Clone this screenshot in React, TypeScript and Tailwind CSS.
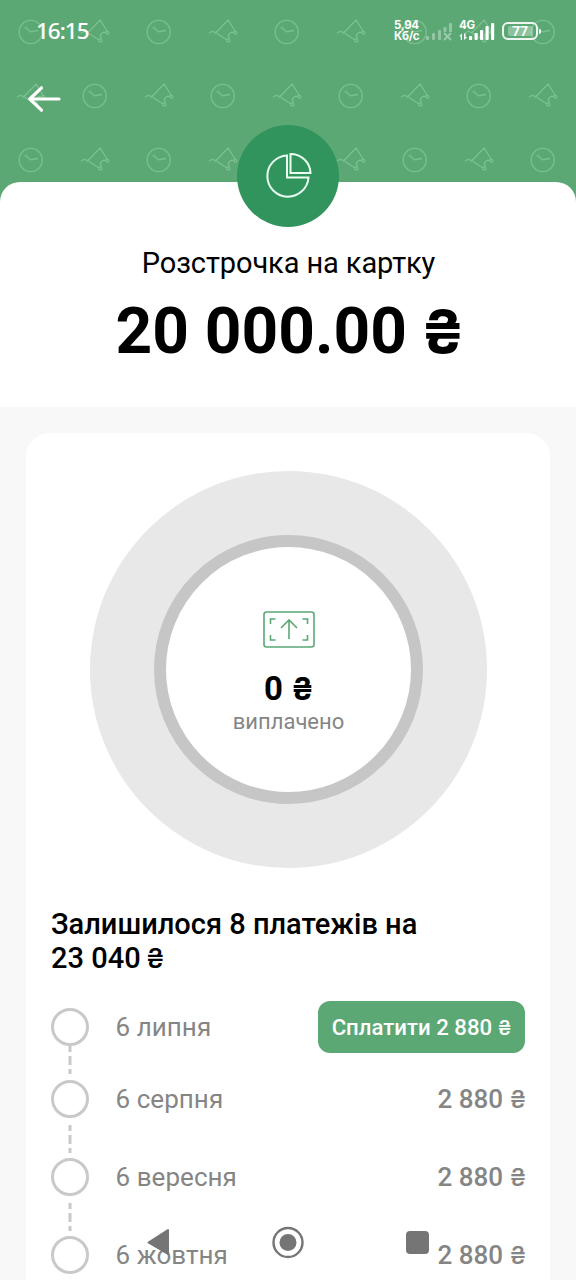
import React from "react";

const CLOCKS: [number, number][] = [];
const TAGS: [number, number][] = [];
for (let row = 0; row < 3; row++) {
  for (let col = 0; col < 9; col++) {
    const point: [number, number] = [30.7 + col * 64, 32 + row * 64];
    ((row + col) % 2 === 0 ? CLOCKS : TAGS).push(point);
  }
}

function Pattern() {
  return (
    <svg className="absolute inset-0" width="576" height="200" viewBox="0 0 576 200" fill="none" stroke="#7ac18e" strokeWidth="1.3" strokeLinecap="round" strokeLinejoin="round">
      {CLOCKS.map(([x, y]) => (
        <g key={`c${x}-${y}`} transform={`translate(${x} ${y})`}>
          <circle r="11.6" />
          <path d="M-5.500-4.800-.500-.200 6.800-1.500" />
        </g>
      ))}
      {TAGS.map(([x, y]) => (
        <g key={`t${x}-${y}`} transform={`translate(${x} ${y})`}>
          <path d="M -13.5 1 L -10.5 -0.8 L -7 0.8 L 5.5 -12 L 12.5 -0.5" />
          <path d="M -7 0.8 L 4 7.8 M 6.3 6.5 C 4.500 2.500 8 -0.500 11 0.500" />
          <circle cx="5.600" cy="8.500" r="1.600" />
          <circle cx="12.600" cy="0.800" r="1.500" />
        </g>
      ))}
    </svg>
  );
}

function StatusBar() {
  return (
    <div className="relative flex h-[62px] items-center pl-[36px] font-['Noto_Sans'] text-white">
      <span className="w-[358px] text-[22.5px] leading-none font-medium tracking-[-1px]">16:15</span>
      <div className="w-[30px] font-[Inter] text-[11.5px] leading-[11.5px] font-bold tracking-[-0.3px] whitespace-nowrap">
        <div>5,94</div>
        <div>Кб/с</div>
      </div>
      <svg className="ml-[1px]" width="28" height="20" viewBox="0 0 28 20" fill="#fff" fillOpacity=".35">
        <rect x="1" y="15" width="3" height="4" rx="1" />
        <rect x="7" y="12" width="3" height="7" rx="1" />
        <rect x="13" y="9" width="3" height="10" rx="1" />
        <rect x="18.500" y="6" width="3" height="5" rx="1" />
        <rect x="24" y="2" width="3" height="9" rx="1" />
        <path d="m19 12 7 7m0-7-7 7" stroke="#fff" strokeOpacity=".4" strokeWidth="2" />
      </svg>
      <div className="relative ml-[6px] h-[20px] w-[38px]">
        <span className="absolute -top-[1px] left-0 font-[Inter] text-[11.5px] leading-[11px] font-bold tracking-[-0.3px]">4G</span>
        <svg className="absolute inset-0" width="38" height="20" viewBox="0 0 38 20" fill="#fff">
          <path d="M.2 15.500 3 12.500v6.500H1.800v-3.500zM5 12.500h1.500v3.500h1.700L5 19z" />
          <rect x="10" y="15" width="3.200" height="4" rx="1" />
          <rect x="15.500" y="12" width="3.200" height="7" rx="1" />
          <rect x="21" y="9" width="3.200" height="10" rx="1" />
          <rect x="26.500" y="5" width="3.200" height="14" rx="1" />
          <rect x="32" y="2" width="3.200" height="17" rx="1" />
        </svg>
      </div>
      <div className="ml-[5px] flex items-center">
        <div className="flex h-[18px] w-[36px] items-center justify-center rounded-[6px] border-2 border-white/90 p-[2px]">
          <span className="flex h-full w-[25px] items-center justify-center rounded-[2px] bg-white/30 text-[14px] leading-none font-semibold">77</span>
        </div>
        <span className="ml-[1px] h-[5px] w-[2px] rounded-r bg-white" />
      </div>
    </div>
  );
}

const PAYMENTS = [
  { date: "6 липня", height: "h-[72px]" },
  { date: "6 серпня", height: "h-[78px]" },
  { date: "6 вересня", height: "h-[78px]" },
  { date: "6 жовтня", height: "h-[78px]" },
];

export default function App() {
  return (
    <div className="relative h-[1280px] w-[576px] overflow-hidden bg-[#f8f8f8] font-[Roboto,sans-serif]">
      <header className="relative h-[182px]">
        <div className="absolute inset-x-0 top-0 h-[210px] bg-[#5ba875]">
          <Pattern />
        </div>
        <StatusBar />
        <button aria-label="Назад" className="relative ml-[27px] mt-[23px] block">
          <svg width="36" height="28" viewBox="0 0 36 28" fill="none" stroke="#fff" strokeWidth="3.200" strokeLinecap="round" strokeLinejoin="round">
            <path d="M32 14H3M14.500 2.800 2.800 14l11.700 11.200" />
          </svg>
        </button>
      </header>

      <section className="relative flex h-[225px] flex-col items-center rounded-t-[20px] bg-white text-black">
        <div className="-mt-[57px] flex h-[102px] w-[102px] shrink-0 items-center justify-center rounded-full bg-[#31945c] pl-[2px]">
          <svg width="46" height="46" viewBox="0 0 46 46" fill="none" stroke="#e9fff2" strokeWidth="2">
            <path d="M21 2.500A20.600 20.600 0 1 0 42.500 24.500H21Z" />
            <path d="M24.500 1V20H44.500A20 19.500 0 0 0 24.500 1Z" />
          </svg>
        </div>
        <h1 className="mt-[18px] pl-[1px] text-[29px] leading-[36px] tracking-[-0.1px] whitespace-nowrap">Розстрочка на картку</h1>
        <p className="mt-[13px] text-[64px] leading-[76px] font-bold whitespace-nowrap">
          20 000.00 <span className="-mr-[4px] -ml-[2px] font-[Inter] text-[59px] leading-none">₴</span>
        </p>
      </section>

      <main className="mx-[26px] mt-[26px] h-[900px] rounded-[24px] bg-white px-[25px] pt-[38px]">
        <div className="mx-auto flex h-[397px] w-[397px] items-center justify-center rounded-full bg-[#e8e8e8]">
          <div className="flex h-[269px] w-[269px] flex-col items-center rounded-full border-[12.5px] border-[#c6c6c6] bg-white pt-[64px]">
            <svg className="relative left-px" width="52" height="37" viewBox="0 0 52 37" fill="none" stroke="#5ba875" strokeWidth="1.600">
              <rect x="1" y="1" width="50" height="35" rx="2.500" />
              <path d="M7.500 13V8h5M39.500 8h5v5M44.500 24v5h-5M12.500 29h-5v-5M26 28V9M18 17l8-8 8 8" />
            </svg>
            <div className="mt-[21px] text-[33px] leading-[40px] font-bold whitespace-nowrap text-black">
              0 <span className="-mr-[2px] font-[Inter] text-[31px] leading-none">₴</span>
            </div>
            <div className="pl-px text-[22px] leading-[26px] text-[#858585]">виплачено</div>
          </div>
        </div>

        <h2 className="mt-[39px] text-[29px] leading-[34px] font-medium whitespace-nowrap text-black">
          Залишилося 8 платежів на
          <br />
          23 040 <span className="-ml-[1.5px] font-[Inter] text-[27px] leading-none">₴</span>
        </h2>

        <ul className="mt-[33px]">
          {PAYMENTS.map((p, i) => (
            <li key={p.date} className={`${p.height} flex text-[26px] leading-[38px] whitespace-nowrap text-[#858585]`}>
              <div className="relative w-[64.5px] shrink-0">
                <div className="h-[38px] w-[38px] rounded-full border-[3px] border-[#c9c9c9]" />
                {i < 3 && (
                  <svg className="absolute left-[17px] top-[38px]" width="4" height="40" viewBox="0 0 4 40" stroke="#c9c9c9" strokeWidth="3">
                    <path d={i === 0 ? "M2 0V6M2 10V19M2 23V28" : "M2 7V13M2 17V26M2 30V35"} />
                  </svg>
                )}
              </div>
              <span className="flex-1 tracking-[0.05px]">{p.date}</span>
              {i === 0 ? (
                <button className="-mt-[7px] h-[52px] w-[207px] rounded-[12px] bg-[#5ba875] text-[22.2px] font-medium text-white">
                  Сплатити 2 880 <span className="font-[Inter] text-[20.5px] leading-none">₴</span>
                </button>
              ) : (
                <span className="font-medium">
                  2 880 <span className="-mr-[1px] font-[Inter] text-[24.5px] leading-none">₴</span>
                </span>
              )}
            </li>
          ))}
        </ul>
      </main>

      <nav className="absolute inset-x-0 bottom-0 h-[76px]">
        <svg width="576" height="76" viewBox="0 0 576 76" fill="#757575">
          <path d="M168 26v24L148.500 38.500Z" stroke="#757575" strokeWidth="2" strokeLinejoin="round" />
          <circle cx="288" cy="38.500" r="14.500" fill="none" stroke="#757575" strokeWidth="2.400" />
          <circle cx="288" cy="38.500" r="8.500" />
          <rect x="406" y="27" width="23" height="23" rx="4" />
        </svg>
      </nav>
    </div>
  );
}
